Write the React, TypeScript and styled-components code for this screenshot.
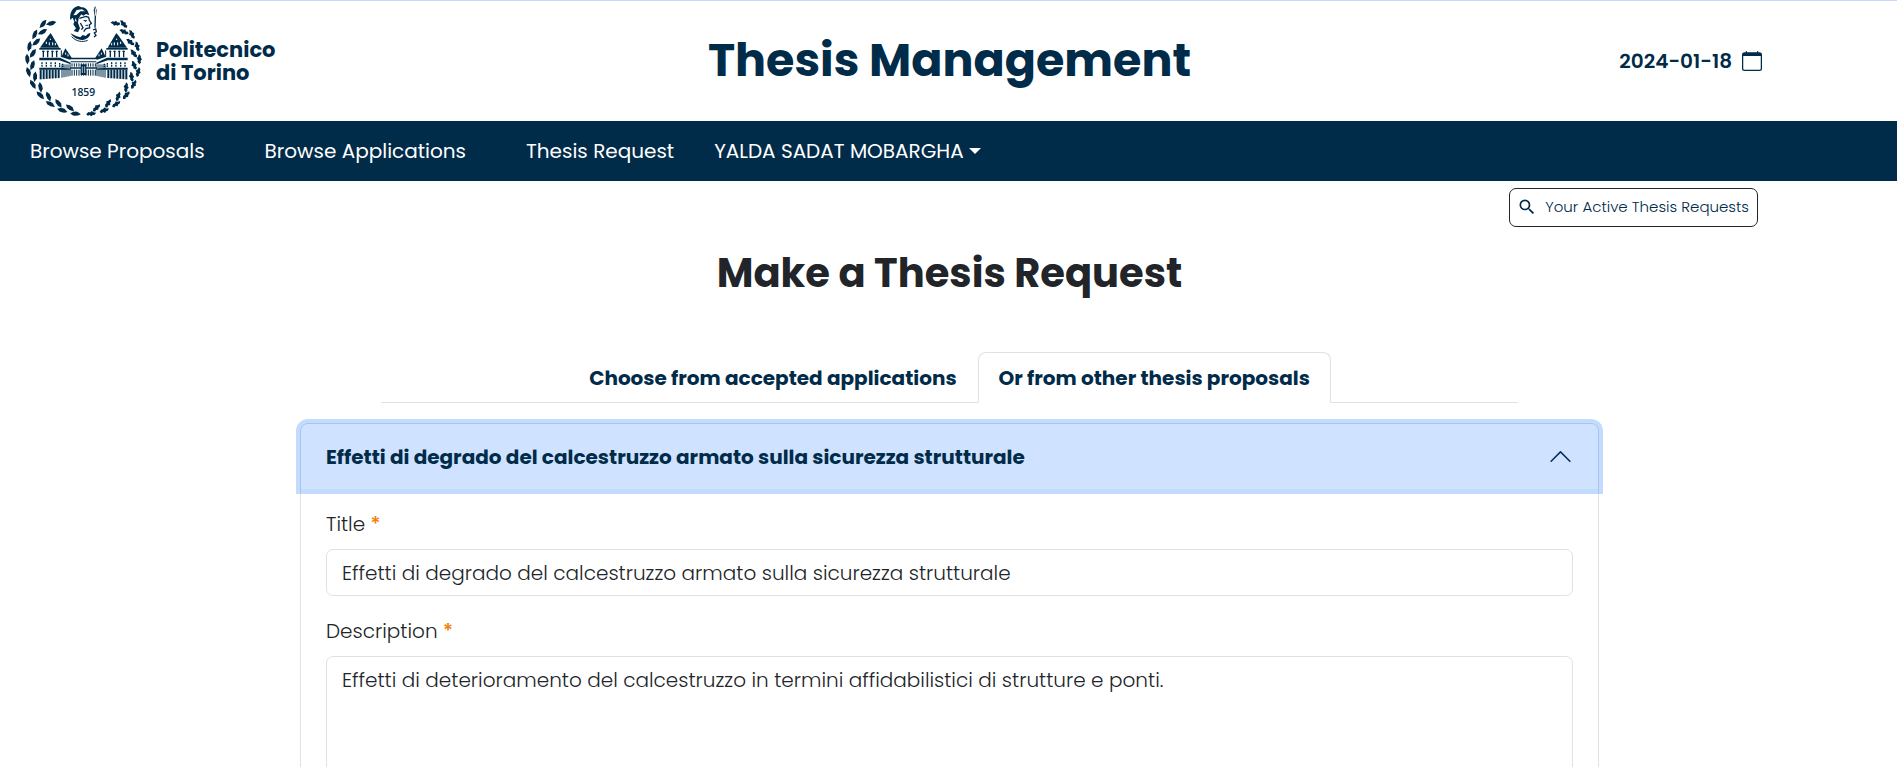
import React from 'react';
import styled, { createGlobalStyle } from 'styled-components';
import { BsCalendar } from 'react-icons/bs';
import { MdSearch } from 'react-icons/md';

const navy = '#002b49';
const ink = '#212529';
const line = '#dee2e6';

const GlobalStyle = createGlobalStyle`
  *, *::before, *::after { box-sizing: border-box; }
  body {
    margin: 0;
    background: #fff;
    color: ${ink};
    font: 400 20px/30px Poppins, Inter, "Liberation Sans", sans-serif;
  }
  button, input, textarea { font: inherit; color: inherit; }
`;

const Page = styled.div`
  height: 100vh;
  overflow-y: auto;
  scrollbar-width: none;
  border-top: 1px solid #c8dafc;
`;

const Header = styled.header`
  display: grid;
  grid-template-columns: 1fr auto 1fr;
  align-items: center;
  height: 120px;
  padding: 0 135px 0 20px;
`;

const Brand = styled.a`
  display: flex;
  align-items: center;
  gap: 6px;
  color: ${navy};
  text-decoration: none;
`;

const Emblem = styled.svg`
  display: block;
  width: 130px;
  height: 119px;
`;

const Wordmark = styled.span`
  display: flex;
  flex-direction: column;
  font-size: 21px;
  line-height: 23px;
  font-weight: 700;
`;

const SiteTitle = styled.h1`
  margin: 0 0 2px 117px;
  color: ${navy};
  font-size: 46px;
  line-height: 58px;
  font-weight: 700;
`;

const DateBox = styled.div`
  display: flex;
  align-items: center;
  justify-content: flex-end;
  gap: 10px;
  color: ${navy};
  font-weight: 600;
`;

const NavBar = styled.nav`
  display: flex;
  align-items: center;
  gap: 40px;
  height: 60px;
  padding: 0 30px;
  background: ${navy};
  color: #fff;
`;

const NavList = styled.ul`
  display: flex;
  gap: 60px;
  margin: 0;
  padding: 0;
  list-style: none;
`;

const NavLink = styled.a`
  color: #fff;
  text-decoration: none;
`;

const UserMenu = styled.button`
  display: flex;
  align-items: center;
  gap: 5px;
  padding: 0;
  border: 0;
  background: none;
  color: #fff;
`;

const Caret = styled.span`
  border: 6px solid transparent;
  border-top-color: #fff;
  border-bottom: 0;
`;

const Content = styled.main`
  padding-left: 2px;
`;

const Actions = styled.div`
  display: flex;
  justify-content: flex-end;
  padding: 7px 139px 0 0;
`;

const SearchButton = styled.button`
  display: flex;
  align-items: center;
  gap: 8px;
  height: 39px;
  padding: 0 8px 1px 7px;
  border: 1px solid ${ink};
  border-radius: 7px;
  background: #fff;
  color: ${navy};
  font-size: 15px;
  line-height: 24px;
  font-weight: 300;
`;

const PageTitle = styled.h2`
  margin: 21px 0 54px;
  font-size: 40px;
  line-height: 50px;
  font-weight: 700;
  text-align: center;
`;

const Tabs = styled.div`
  display: flex;
  justify-content: center;
  width: 60%;
  margin: 0 auto;
  border-bottom: 1px solid ${line};
`;

const Tab = styled.button<{ $active?: boolean }>`
  height: 51px;
  margin-bottom: -1px;
  padding: 0 20px;
  border: 1px solid ${p => (p.$active ? line : 'transparent')};
  border-bottom-color: ${p => (p.$active ? '#fff' : 'transparent')};
  border-radius: 8px 8px 0 0;
  background: ${p => (p.$active ? '#fff' : 'none')};
  color: ${navy};
  font-weight: 700;
`;

const Accordion = styled.section`
  max-width: 1299px;
  margin: 20px auto 40px;
  border: 1px solid ${line};
  border-radius: 8px;
`;

const AccordionHeading = styled.h3`
  margin: 0;
  font: inherit;
`;

const AccordionToggle = styled.button`
  position: relative;
  display: flex;
  align-items: center;
  justify-content: space-between;
  width: 100%;
  height: 65px;
  padding: 0 25px;
  border: 0;
  border-radius: 7px 7px 0 0;
  background: #cfe2ff;
  box-shadow: 0 0 0 5px rgba(13, 110, 253, 0.25);
  color: ${navy};
  font-weight: 700;
  text-align: left;
`;

const Chevron = styled.svg`
  display: block;
  width: 25px;
  height: 25px;
  fill: #052c65;
`;

const AccordionBody = styled.form`
  padding: 20px 25px;
`;

const Field = styled.div`
  display: flex;
  flex-direction: column;
  gap: 10px;
  margin-bottom: 20px;
  font-weight: 300;
`;

const Required = styled.span`
  color: #ef7b00;
  font-weight: 500;
`;

const TextInput = styled.input`
  width: 100%;
  height: 47px;
  padding: 0 15px;
  border: 1px solid ${line};
  border-radius: 7px;
  background: #fff;
`;

const TextArea = styled.textarea`
  display: block;
  width: 100%;
  height: 198px;
  padding: 8px 15px;
  border: 1px solid ${line};
  border-radius: 7px;
  background: #fff;
  resize: vertical;
`;

type Leaf = { x: number; y: number; turn: number };

const leaves = (side: 1 | -1): Leaf[] =>
  Array.from({ length: 20 }, (_, i) => {
    const a = ((i * 7 + 8) * Math.PI) / 180;
    const r = i % 2 ? 153 : 168;
    const lean = i % 2 ? 24 : -6;
    return {
      x: 190 - side * Math.sin(a) * r,
      y: 180 + Math.cos(a) * r * 0.95,
      turn: side * ((a * 180) / Math.PI + lean),
    };
  });

const columns = (from: number, to: number, step: number) =>
  Array.from({ length: Math.floor((to - from) / step) + 1 }, (_, i) => from + i * step);

const Wing = () => (
  <g>
    <path d="M92 96 L97 104 L118 140 H60 L84 106 Z" />
    <path d="M79 122v7M91 113v4M88 124v9M98 124v9M106 126v7" stroke="#fff" strokeWidth="3" />
    <path d="M58 141H122V146H58Z" />
    <path d="M70 149V169M83 149V169M97 149V169M110 149V169" stroke={navy} strokeWidth="4" />
    <path d="M66 151h8M80 151h7M94 151h7M107 151h7" stroke={navy} strokeWidth="3" />
    <path d="M58 170H120L152 185V190L118 178H58Z" />
    <path d="M136 142L156 172L150 176L124 168Z" />
    <path d="M137 155v6M144 160v6" stroke="#fff" strokeWidth="3" />
    <path d="M124 148V168" stroke={navy} strokeWidth="3" />
    <path d="M66 184v13M79 184v13M93 184v13M106 184v13M119 186v12M128 188v10" stroke={navy} strokeWidth="4" strokeDasharray="5 2 6" />
    <path d="M58 200H122L152 203V206H58Z" />
    {columns(62, 118, 9).map(x => (
      <path key={x} d={`M${x} 206V${235 - (x - 62) / 14}`} stroke={navy} strokeWidth="6" />
    ))}
    {columns(126, 150, 6).map(x => (
      <path key={x} d={`M${x} 190V${230 - (x - 126) / 5}`} stroke={navy} strokeWidth="3" />
    ))}
  </g>
);

const University = () => (
  <Emblem viewBox="0 3 390 357" fill={navy} role="img" aria-label="University seal">
    {leaves(1).map((l, i) => (
      <path key={i} d="M-16 0Q-6 -8 5 -6L16 1Q5 8 -7 6Z" transform={`translate(${l.x} ${l.y}) rotate(${l.turn})`} />
    ))}
    {leaves(-1).map((l, i) => (
      <path key={i} d="M-15 1L-8 -5L-3 -4L2 -8L7 -4L15 -2L10 4L5 4L0 8L-5 4L-10 6Z" transform={`translate(${l.x} ${l.y}) rotate(${l.turn})`} />
    ))}
    <Wing />
    <g transform="translate(381 0) scale(-1 1)">
      <Wing />
    </g>
    <path d="M152 170H229V175H152ZM152 181H229V184H152ZM150 199H231V203H150Z" />
    {columns(156, 226, 7).map(x => (
      <path key={x} d={`M${x} 187V197M${x} 206V224`} stroke={navy} strokeWidth="3" />
    ))}
    <path d="M182 190H199V222H182Z" />
    <path d="M187 196v20M194 196v20" stroke="#fff" strokeWidth="2" />
    <path d="M151 57C148 34 158 18 176 15L184 19C192 18 201 23 204 32L208 43L198 39L190 44L184 40L176 52L174 66L180 82L174 94L161 90L168 82L160 70L163 62L158 50Z" />
    <path d="M170 27L186 25L195 31L181 31L169 42L160 43ZM167 50L170 62L165 60Z" fill="#fff" />
    <path d="M178 52L198 46L206 49L208 58L214 67L208 72L209 81L198 83L191 92M181 66L189 80L184 86" fill="none" stroke={navy} strokeWidth="4" />
    <path d="M189 57L202 58L197 63ZM194 72L205 71L202 76Z" />
    <path d="M152 97C160 111 176 119 192 116C204 113 211 105 211 96L204 98L197 105L188 102L181 109L168 105Z" />
    <path d="M155 107C168 121 187 125 203 118" fill="none" stroke={navy} strokeWidth="3" />
    <path d="M225 15L230 27L228 46L227 80H223L224 46L221 28Z" />
    <path d="M226 22V44" stroke="#fff" strokeWidth="3" />
    <path d="M219 87L227 84L229 92L223 96L228 103L222 108" fill="none" stroke={navy} strokeWidth="4" />
    <text x="190" y="284" textAnchor="middle" fontFamily="'Open Sans', sans-serif" fontSize="31" fontWeight="600">
      1859
    </text>
  </Emblem>
);

export default function App() {
  return (
    <Page>
      <GlobalStyle />
      <Header>
        <Brand href="#">
          <University />
          <Wordmark>
            <span>Politecnico</span>
            <span>di Torino</span>
          </Wordmark>
        </Brand>
        <SiteTitle>Thesis Management</SiteTitle>
        <DateBox>
          <time dateTime="2024-01-18">2024-01-18</time>
          <BsCalendar size={20} />
        </DateBox>
      </Header>
      <NavBar>
        <NavList>
          <li><NavLink href="#proposals">Browse Proposals</NavLink></li>
          <li><NavLink href="#applications">Browse Applications</NavLink></li>
          <li><NavLink href="#request">Thesis Request</NavLink></li>
        </NavList>
        <UserMenu type="button">
          YALDA SADAT MOBARGHA
          <Caret />
        </UserMenu>
      </NavBar>
      <Content>
        <Actions>
          <SearchButton type="button">
            <MdSearch size={20} />
            Your Active Thesis Requests
          </SearchButton>
        </Actions>
        <PageTitle>Make a Thesis Request</PageTitle>
        <Tabs role="tablist">
          <Tab type="button" role="tab" aria-selected={false}>Choose from accepted applications</Tab>
          <Tab type="button" role="tab" aria-selected $active>Or from other thesis proposals</Tab>
        </Tabs>
        <Accordion>
          <AccordionHeading>
            <AccordionToggle type="button" aria-expanded>
              Effetti di degrado del calcestruzzo armato sulla sicurezza strutturale
              <Chevron viewBox="0 0 16 16" aria-hidden>
                <path fillRule="evenodd" d="M14.354 11.354a.5.5 0 0 1-.708 0L8 5.707l-5.646 5.647a.5.5 0 0 1-.708-.708l6-6a.5.5 0 0 1 .708 0l6 6a.5.5 0 0 1 0 .708z" />
              </Chevron>
            </AccordionToggle>
          </AccordionHeading>
          <AccordionBody>
            <Field>
              <label htmlFor="title">Title <Required>*</Required></label>
              <TextInput id="title" defaultValue="Effetti di degrado del calcestruzzo armato sulla sicurezza strutturale" />
            </Field>
            <Field>
              <label htmlFor="description">Description <Required>*</Required></label>
              <TextArea id="description" defaultValue="Effetti di deterioramento del calcestruzzo in termini affidabilistici di strutture e ponti." />
            </Field>
          </AccordionBody>
        </Accordion>
      </Content>
    </Page>
  );
}
